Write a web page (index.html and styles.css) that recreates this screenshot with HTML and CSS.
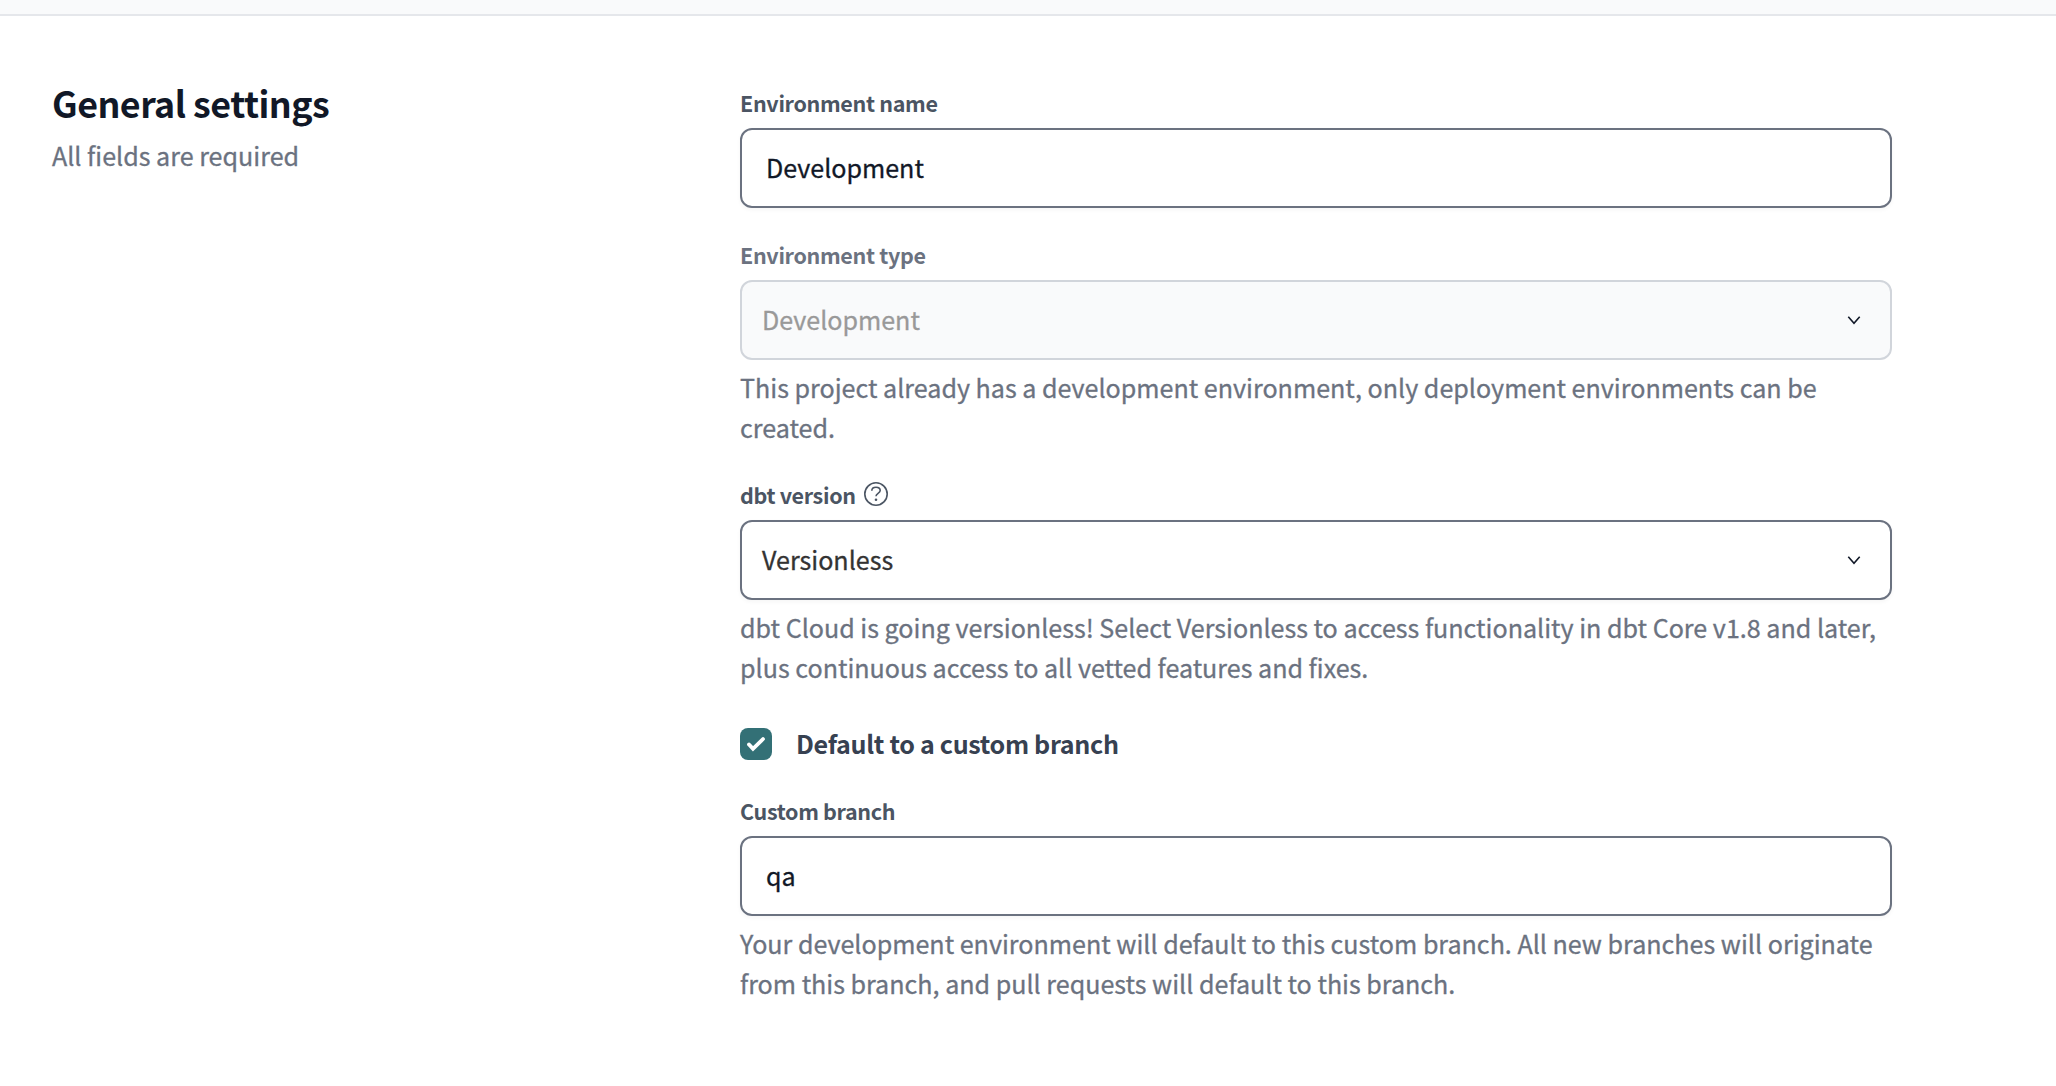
FILE: index.html
```html
<!DOCTYPE html>
<html lang="en">
<head>
<meta charset="utf-8">
<title>General settings</title>
<link rel="stylesheet" href="styles.css">
</head>
<body>
<div class="topbar"></div>
<main class="settings">
  <header class="intro">
    <h1>General settings</h1>
    <p>All fields are required</p>
  </header>
  <form class="fields">
    <section class="field">
      <div class="label"><span>Environment name</span></div>
      <div class="control input"><span>Development</span></div>
    </section>
    <section class="field disabled">
      <div class="label"><span>Environment type</span></div>
      <div class="control select"><span>Development</span>
        <svg class="chevron" viewBox="0 0 16 16"><path d="M2.300 4.700 8 11.200l5.700-6.500"/></svg></div>
      <p class="help"><span>This project already has a development environment, only deployment environments can be</span><br><span>created.</span></p>
    </section>
    <section class="field">
      <div class="label"><span>dbt version</span>
        <svg class="question" viewBox="0 0 24 24"><circle cx="12" cy="12" r="11.200"/><path d="M7.800 8.700C7.800 6.500 9.700 5.200 12 5.200s4.200 1.300 4.200 3.300c0 2.900-4.200 3-4.200 5.800"/><circle class="dot" cx="12" cy="17.700" r="1.300"/></svg></div>
      <div class="control select"><span>Versionless</span>
        <svg class="chevron" viewBox="0 0 16 16"><path d="M2.300 4.700 8 11.200l5.700-6.500"/></svg></div>
      <p class="help"><span>dbt Cloud is going versionless! Select Versionless to access functionality in dbt Core v1.8 and later,</span><br><span>plus continuous access to all vetted features and fixes.</span></p>
    </section>
    <div class="check-row">
      <span class="checkbox"><svg viewBox="0 0 32 32"><path d="M9 16.500 13 20.800 23 11"/></svg></span>
      <span class="check-text">Default to a custom branch</span>
    </div>
    <section class="field">
      <div class="label"><span>Custom branch</span></div>
      <div class="control input"><span>qa</span></div>
      <p class="help"><span>Your development environment will default to this custom branch. All new branches will originate</span><br><span>from this branch, and pull requests will default to this branch.</span></p>
    </section>
  </form>
</main>
</body>
</html>
```
FILE: styles.css
```css
* { box-sizing: border-box; }
body { margin: 0; height: 1086px; overflow: hidden; background: #fff; color: #111827; font: 25.08px/40px "Noto Sans CJK SC", sans-serif; }
.topbar { height: 16px; background: #f9fafb; border-bottom: 2px solid #e5e7eb; }
.settings { display: grid; grid-template-columns: 688px 1152px; padding: 66px 0 0 52px; }
h1 { margin: 0; font-size: 35.8px; line-height: 40px; font-weight: 600; letter-spacing: -0.52px; }
p { margin: 0; white-space: nowrap; color: #6b7280; }
p, .control { -webkit-text-stroke: 0.3px currentColor; }
.intro p { margin-top: 13px; }
.fields { padding-top: 2px; }
.label { display: flex; align-items: center; gap: 8px; height: 40px; margin-bottom: 4px; font-size: 21.5px; letter-spacing: -0.33px; font-weight: 600; color: #4b5563; }
.label span, .control span, .check-text { padding-bottom: 2px; }
.control { display: flex; align-items: center; height: 80px; border: 2px solid #6b7280; border-radius: 12px; padding: 0 24px; box-shadow: 0 2px 4px rgba(0, 0, 0, .04); }
.select { justify-content: space-between; padding: 0 28px 0 20px; color: #333; }
.field { margin-bottom: 28px; }
.help { padding-bottom: 1px; margin-top: 7px; }
.field:has(+ .check-row) { margin-bottom: 36px; }
.disabled .label { color: #6b7280; }
.disabled .control { color: #999; background: #f9fafb; border-color: #d1d5db; box-shadow: none; }
.chevron { width: 16px; height: 16px; fill: none; stroke: #111827; stroke-width: 1.6; }
.question { width: 24px; height: 24px; margin-bottom: 4px; fill: none; stroke: #4b5563; stroke-width: 1.6; }
.question .dot { fill: #4b5563; stroke: none; }
.check-row { display: flex; align-items: center; gap: 24px; height: 40px; margin-bottom: 28px; color: #374151; font-weight: 600; letter-spacing: -0.33px; }
.checkbox { width: 32px; height: 32px; border-radius: 8px; background: #337076; }
.checkbox svg { display: block; width: 32px; height: 32px; fill: none; stroke: #fff; stroke-width: 3.8; stroke-linecap: round; }
```
